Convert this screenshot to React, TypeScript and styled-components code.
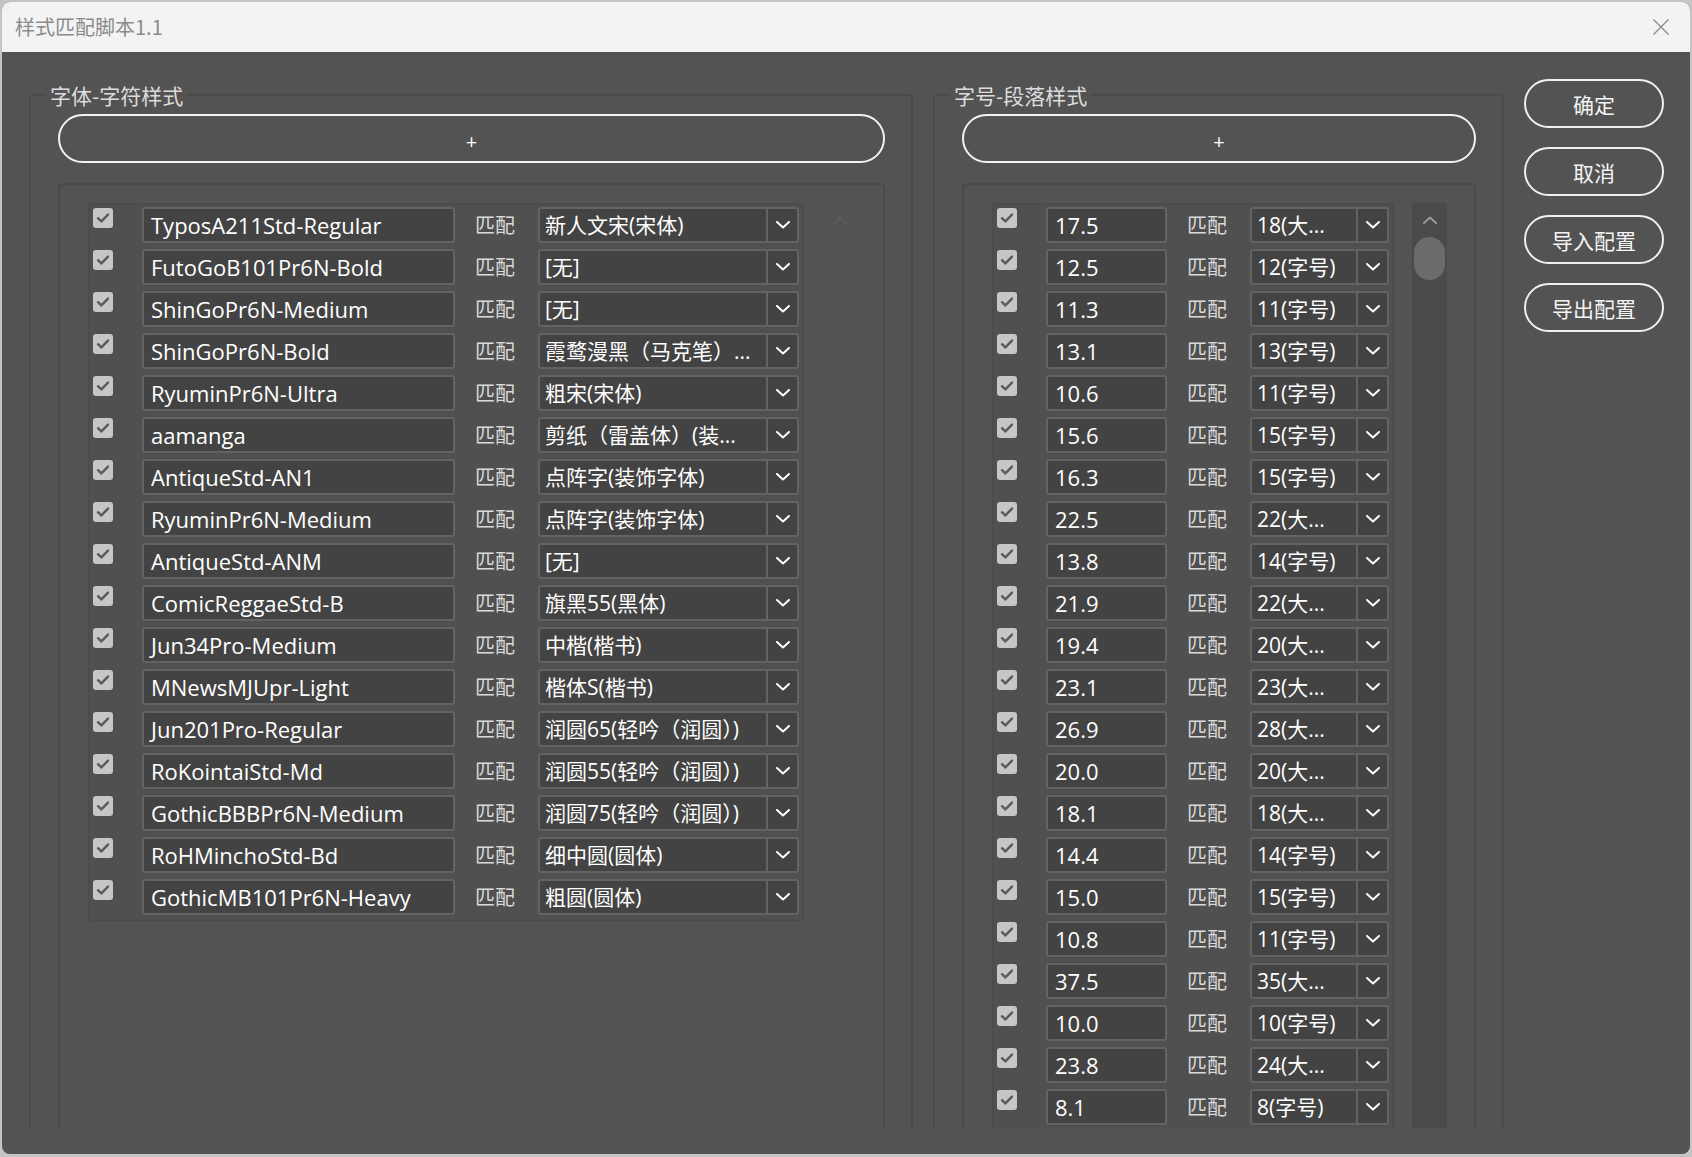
import React from "react";
import styled, { createGlobalStyle } from "styled-components";

const GlobalStyle = createGlobalStyle`
  html, body { margin: 0; padding: 0; }
  body {
    background: #c4c4c4;
    font-family: "Open Sans", "Noto Sans CJK SC", "Noto Sans", sans-serif;
    overflow: hidden;
  }
  * { box-sizing: border-box; }
`;

const Window = styled.div`
  width: 1688px;
  height: 1152px;
  margin: 2px;
  border-radius: 8px;
  overflow: hidden;
  background: #535353;
  display: flex;
  flex-direction: column;
`;

const TitleBar = styled.div`
  height: 50px;
  flex: none;
  background: #f3f3f3;
  display: flex;
  align-items: center;
  justify-content: space-between;
  padding: 0 20px 0 13px;
`;

const Title = styled.div`
  font-family: "Noto Sans CJK SC", sans-serif;
  font-size: 20px;
  color: #8b8b8b;
  line-height: 1;
`;

const CloseIcon = () => (
  <svg width="18" height="18" viewBox="0 0 18 18">
    <path d="M1.5 1.5 L16.5 16.5 M16.5 1.5 L1.5 16.5" stroke="#8a8a8a" strokeWidth="1.3" fill="none" />
  </svg>
);

const Body = styled.div`
  flex: 1;
  min-height: 0;
  padding: 0 26px 26px 27px;
  display: flex;
`;

const Columns = styled.div`
  flex: 1;
  display: flex;
  align-items: flex-start;
  gap: 20px;
  padding-top: 27px;
  overflow: hidden;
`;

const Group = styled.fieldset<{ $width: number }>`
  width: ${(p) => p.$width}px;
  height: 1100px;
  flex: none;
  margin: 3px 0 0;
  padding: 0 26px 0 27px;
  border: 2px solid #4b4b4b;
  border-radius: 4px;
  min-width: 0;
`;

const Legend = styled.legend`
  font-family: "Noto Sans CJK SC", sans-serif;
  font-size: 21px;
  line-height: 26px;
  color: #dcdcdc;
  padding: 0 4px;
  margin-left: -12px;
`;

const PlusButton = styled.button`
  display: block;
  width: 100%;
  height: 49px;
  margin-top: 6px;
  border: 2px solid #f2f2f2;
  border-radius: 25px;
  background: transparent;
  color: #ffffff;
  font-family: "Open Sans", sans-serif;
  font-size: 20px;
  line-height: 1;
  padding: 6px 0 0;
`;

const ListBox = styled.div`
  margin-top: 20px;
  height: 1000px;
  border: 2px solid #4a4a4a;
  border-radius: 4px;
  padding: 18px 28px 0 28px;
  display: flex;
  align-items: stretch;
  gap: 18px;
`;

const RowsBox = styled.div`
  align-self: flex-start;
  border: 2px solid #4c4c4c;
  border-radius: 3px;
  padding: 0 3px;
  background: #505050;
`;

const Row = styled.div`
  height: 42px;
  display: flex;
  align-items: flex-start;
  padding-top: 2px;
`;

const Check = styled.div`
  width: 20px;
  height: 20px;
  margin-top: 1px;
  border-radius: 3px;
  background: #c6c6c6;
  display: flex;
  align-items: center;
  justify-content: center;
  flex: none;
`;

const CheckMark = () => (
  <svg width="20" height="20" viewBox="0 0 20 20">
    <path d="M5 10.2 L8.4 13.4 L15 6.6" stroke="#5a5a5a" strokeWidth="2.4" fill="none" strokeLinecap="round" strokeLinejoin="round" />
  </svg>
);

const Field = styled.div<{ $width: number }>`
  width: ${(p) => p.$width}px;
  height: 36px;
  margin-left: 29px;
  flex: none;
  background: #434343;
  border: 2px solid #636363;
  border-radius: 3px;
  padding-left: 7px;
  color: #ffffff;
  font-size: 22px;
  line-height: 33px;
  white-space: nowrap;
  overflow: hidden;
`;

const MatchLabel = styled.div`
  margin-left: 20px;
  width: 40px;
  height: 36px;
  flex: none;
  font-family: "Noto Sans CJK SC", sans-serif;
  font-size: 20px;
  line-height: 36px;
  color: #dadada;
  white-space: nowrap;
`;

const Select = styled.div<{ $width: number }>`
  width: ${(p) => p.$width}px;
  height: 36px;
  margin-left: 23px;
  flex: none;
  display: flex;
  background: #434343;
  border: 2px solid #636363;
  border-radius: 3px;
`;

const SelectText = styled.div`
  flex: 1;
  min-width: 0;
  padding-left: 5px;
  color: #ffffff;
  font-size: 21px;
  line-height: 33px;
  white-space: nowrap;
  overflow: hidden;
`;

const SelectArrow = styled.div`
  width: 31px;
  flex: none;
  border-left: 2px solid #636363;
  display: flex;
  align-items: center;
  justify-content: center;
`;

const Chevron = ({ color = "#ffffff", up = false }: { color?: string; up?: boolean }) => (
  <svg width="14" height="8" viewBox="0 0 14 8">
    <path
      d={up ? "M1 7 L7 1.5 L13 7" : "M1 1 L7 6.5 L13 1"}
      stroke={color}
      strokeWidth="2"
      fill="none"
      strokeLinecap="round"
      strokeLinejoin="round"
    />
  </svg>
);

const ScrollTrack = styled.div<{ $visible: boolean }>`
  width: 35px;
  flex: none;
  background: ${(p) => (p.$visible ? "#4a4a4a" : "transparent")};
  display: flex;
  flex-direction: column;
  align-items: center;
  padding-top: 13px;
`;

const ScrollThumb = styled.div`
  width: 31px;
  height: 43px;
  margin-top: 13px;
  border-radius: 16px;
  background: #6b6b6b;
`;

const ButtonColumn = styled.div`
  width: 140px;
  flex: none;
  display: flex;
  flex-direction: column;
  gap: 19px;
`;

const ActionButton = styled.button`
  height: 49px;
  border: 2px solid #f0f0f0;
  border-radius: 25px;
  background: transparent;
  color: #f4f4f4;
  font-family: "Noto Sans CJK SC", sans-serif;
  font-size: 21px;
  padding: 0;
`;

const fontRows: [string, string][] = [
  ["TyposA211Std-Regular", "新人文宋(宋体)"],
  ["FutoGoB101Pr6N-Bold", "[无]"],
  ["ShinGoPr6N-Medium", "[无]"],
  ["ShinGoPr6N-Bold", "霞鹜漫黑（马克笔）..."],
  ["RyuminPr6N-Ultra", "粗宋(宋体)"],
  ["aamanga", "剪纸（雷盖体）(装..."],
  ["AntiqueStd-AN1", "点阵字(装饰字体)"],
  ["RyuminPr6N-Medium", "点阵字(装饰字体)"],
  ["AntiqueStd-ANM", "[无]"],
  ["ComicReggaeStd-B", "旗黑55(黑体)"],
  ["Jun34Pro-Medium", "中楷(楷书)"],
  ["MNewsMJUpr-Light", "楷体S(楷书)"],
  ["Jun201Pro-Regular", "润圆65(轻吟（润圆）)"],
  ["RoKointaiStd-Md", "润圆55(轻吟（润圆）)"],
  ["GothicBBBPr6N-Medium", "润圆75(轻吟（润圆）)"],
  ["RoHMinchoStd-Bd", "细中圆(圆体)"],
  ["GothicMB101Pr6N-Heavy", "粗圆(圆体)"],
];

const sizeRows: [string, string][] = [
  ["17.5", "18(大..."],
  ["12.5", "12(字号)"],
  ["11.3", "11(字号)"],
  ["13.1", "13(字号)"],
  ["10.6", "11(字号)"],
  ["15.6", "15(字号)"],
  ["16.3", "15(字号)"],
  ["22.5", "22(大..."],
  ["13.8", "14(字号)"],
  ["21.9", "22(大..."],
  ["19.4", "20(大..."],
  ["23.1", "23(大..."],
  ["26.9", "28(大..."],
  ["20.0", "20(大..."],
  ["18.1", "18(大..."],
  ["14.4", "14(字号)"],
  ["15.0", "15(字号)"],
  ["10.8", "11(字号)"],
  ["37.5", "35(大..."],
  ["10.0", "10(字号)"],
  ["23.8", "24(大..."],
  ["8.1", "8(字号)"],
];

const MatchList = ({
  rows,
  fieldWidth,
  selectWidth,
  scrollVisible,
}: {
  rows: [string, string][];
  fieldWidth: number;
  selectWidth: number;
  scrollVisible: boolean;
}) => (
  <ListBox>
    <RowsBox>
      {rows.map(([name, value], i) => (
        <Row key={i}>
          <Check>
            <CheckMark />
          </Check>
          <Field $width={fieldWidth}>{name}</Field>
          <MatchLabel>匹配</MatchLabel>
          <Select $width={selectWidth}>
            <SelectText>{value}</SelectText>
            <SelectArrow>
              <Chevron />
            </SelectArrow>
          </Select>
        </Row>
      ))}
    </RowsBox>
    <ScrollTrack $visible={scrollVisible}>
      <Chevron up color={scrollVisible ? "#9a9a9a" : "#5d5d5d"} />
      {scrollVisible && <ScrollThumb />}
    </ScrollTrack>
  </ListBox>
);

export default function App() {
  return (
    <>
      <GlobalStyle />
      <Window>
        <TitleBar>
          <Title>样式匹配脚本1.1</Title>
          <CloseIcon />
        </TitleBar>
        <Body>
          <Columns>
            <Group $width={884}>
              <Legend>字体-字符样式</Legend>
              <PlusButton>+</PlusButton>
              <MatchList rows={fontRows} fieldWidth={313} selectWidth={261} scrollVisible={false} />
            </Group>
            <Group $width={571}>
              <Legend>字号-段落样式</Legend>
              <PlusButton>+</PlusButton>
              <MatchList rows={sizeRows} fieldWidth={121} selectWidth={139} scrollVisible={true} />
            </Group>
            <ButtonColumn>
              <ActionButton>确定</ActionButton>
              <ActionButton>取消</ActionButton>
              <ActionButton>导入配置</ActionButton>
              <ActionButton>导出配置</ActionButton>
            </ButtonColumn>
          </Columns>
        </Body>
      </Window>
    </>
  );
}
